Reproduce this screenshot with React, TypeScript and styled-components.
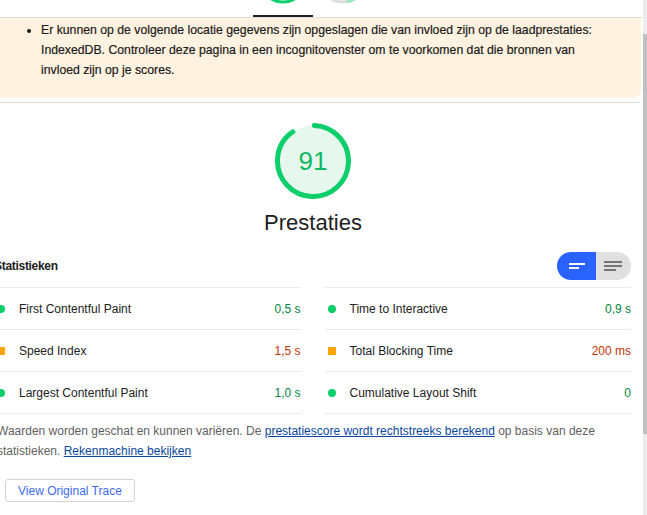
import React from "react";
import styled, { createGlobalStyle } from "styled-components";

const GlobalStyle = createGlobalStyle`
  html, body { margin: 0; padding: 0; background: #fff; }
  body {
    font-family: "Liberation Sans", Arial, sans-serif;
    color: #212121;
    overflow: hidden;
  }
  * { box-sizing: border-box; }
`;

const Page = styled.div`
  display: flex;
  width: 647px;
  height: 515px;
  overflow: hidden;
`;

const Main = styled.div`
  flex: 1;
  min-width: 0;
  overflow: hidden;
`;

const Scrollbar = styled.div`
  width: 4px;
  flex: none;
  background: #ececec;
  display: flex;
  flex-direction: column;
`;

const Thumb = styled.div`
  margin-top: 34px;
  height: 400px;
  background: #c1c1c1;
`;

const TabBar = styled.div`
  display: flex;
  margin-top: -36px;
  padding-left: 253px;
  border-bottom: 1px solid #e0e0e0;
`;

const Tab = styled.div<{ $active?: boolean }>`
  width: 60px;
  height: 53px;
  display: flex;
  align-items: flex-end;
  justify-content: center;
  padding-bottom: 11px;
  border-bottom: 2px solid ${(p) => (p.$active ? "#202124" : "transparent")};
`;

const Warning = styled.div`
  margin-right: 2px;
  background: #fff2e0;
  border-bottom-right-radius: 8px;
  padding: 2px 0 18px;
`;

const WarnList = styled.ul`
  margin: 0;
  padding: 0 0 0 41px;
  list-style: disc;
  font-size: 12.25px;
  line-height: 20px;
  color: #1b1b1b;
  -webkit-text-stroke: 0.2px #1b1b1b;
  li { padding-right: 14px; }
`;

const Divider = styled.div`
  margin: 4px 4px 0 0;
  height: 1px;
  background: #dcdcdc;
`;

const Category = styled.section`
  display: flex;
  flex-direction: column;
  align-items: center;
  padding-top: 20px;
`;

const GaugeWrap = styled.div`
  position: relative;
  width: 76px;
  height: 76px;
  margin-right: 17px;
`;

const Score = styled.div`
  position: absolute;
  inset: 0;
  display: flex;
  align-items: center;
  justify-content: center;
  font-size: 26px;
  color: #0fb862;
`;

const GaugeLabel = styled.div`
  margin-top: 12px;
  margin-right: 17px;
  font-size: 22px;
  line-height: 24px;
  color: #212121;
`;

const Metrics = styled.div`
  align-self: stretch;
  margin: 17px 12px 0 -6px;
`;

const MetricsHeader = styled.div`
  display: flex;
  align-items: center;
  justify-content: space-between;
  height: 28px;
`;

const Title = styled.div`
  font-size: 12px;
  font-weight: bold;
  letter-spacing: -0.3px;
  color: #202020;
`;

const Toggle = styled.div`
  display: flex;
  width: 74px;
  height: 28px;
  border-radius: 14px;
  overflow: hidden;
`;

const ToggleHalf = styled.div<{ $on?: boolean }>`
  flex: 1;
  display: flex;
  flex-direction: column;
  justify-content: center;
  align-items: flex-start;
  gap: 2px;
  padding-left: ${(p) => (p.$on ? "12px" : "8px")};
  background: ${(p) => (p.$on ? "#2962ff" : "#e0e0e0")};
`;

const Bar = styled.div<{ $w: number; $c: string }>`
  width: ${(p) => p.$w}px;
  height: 2px;
  background: ${(p) => p.$c};
`;

const MetricGrid = styled.div`
  display: grid;
  grid-template-columns: 1fr 1fr;
  column-gap: 24px;
  margin-top: 7px;
`;

const Metric = styled.div`
  display: flex;
  align-items: center;
  height: 42px;
  border-top: 1px solid #ebebeb;
  font-size: 12px;
  &:nth-last-child(-n + 2) {
    height: 43px;
    border-bottom: 1px solid #ebebeb;
  }
`;

const Icon = styled.span<{ $kind: "pass" | "average" }>`
  flex: none;
  width: 8px;
  height: 8px;
  margin: 0 14px 0 3px;
  border-radius: ${(p) => (p.$kind === "pass" ? "50%" : "0")};
  background: ${(p) => (p.$kind === "pass" ? "#0cce6b" : "#ffa400")};
`;

const Label = styled.span`
  flex: 1;
  color: #212121;
`;

const Value = styled.span<{ $kind: "pass" | "average" }>`
  color: ${(p) => (p.$kind === "pass" ? "#018642" : "#c33300")};
`;

const Footnote = styled.p`
  margin: 7px 0 0 3px;
  font-size: 12px;
  line-height: 20px;
  color: #616161;
  a {
    color: #0b47a1;
    text-decoration: underline;
  }
`;

const TraceButton = styled.button`
  display: block;
  margin: 18px 0 0 11px;
  height: 23px;
  padding: 0 12px;
  border: 1px solid #d3d3d3;
  border-radius: 3px;
  background: #fff;
  color: #3d6cf4;
  font-family: "Liberation Sans", Arial, sans-serif;
  font-size: 12px;
`;

const TabGauge: React.FC<{ variant: "pass" | "pwa" }> = ({ variant }) => {
  const r = 23;
  const c = 2 * Math.PI * r;
  return (
    <svg width="50" height="50" viewBox="0 0 50 50">
      {variant === "pass" ? (
        <>
          <circle cx="25" cy="25" r={r} fill="#e6f8ee" />
          <circle
            cx="25"
            cy="25"
            r={r}
            fill="none"
            stroke="#0cce6b"
            strokeWidth="3"
          />
        </>
      ) : (
        <>
          <circle cx="25" cy="25" r={r} fill="#f5f5f5" stroke="#dcdcdc" strokeWidth="3" />
          <circle
            cx="25"
            cy="25"
            r={r}
            fill="none"
            stroke="#9fe3bf"
            strokeWidth="3"
            strokeDasharray={`${c * 0.25} ${c}`}
            transform="rotate(-10 25 25)"
          />
        </>
      )}
    </svg>
  );
};

const BigGauge: React.FC<{ score: number }> = ({ score }) => {
  const r = 35.5;
  const c = 2 * Math.PI * r;
  return (
    <svg width="76" height="76" viewBox="0 0 76 76">
      <circle cx="38" cy="38" r={r} fill="#e6f8ee" />
      <circle
        cx="38"
        cy="38"
        r={r}
        fill="none"
        stroke="#0cce6b"
        strokeWidth="5"
        strokeLinecap="round"
        strokeDasharray={`${c * (score / 100) - 3} ${c}`}
        transform="rotate(-88 38 38)"
      />
    </svg>
  );
};

type Kind = "pass" | "average";
const metrics: { label: string; value: string; kind: Kind }[] = [
  { label: "First Contentful Paint", value: "0,5 s", kind: "pass" },
  { label: "Time to Interactive", value: "0,9 s", kind: "pass" },
  { label: "Speed Index", value: "1,5 s", kind: "average" },
  { label: "Total Blocking Time", value: "200 ms", kind: "average" },
  { label: "Largest Contentful Paint", value: "1,0 s", kind: "pass" },
  { label: "Cumulative Layout Shift", value: "0", kind: "pass" },
];

export default function App() {
  return (
    <>
      <GlobalStyle />
      <Page>
        <Main>
          <TabBar>
            <Tab $active>
              <TabGauge variant="pass" />
            </Tab>
            <Tab>
              <TabGauge variant="pwa" />
            </Tab>
          </TabBar>
          <Warning>
            <WarnList>
              <li>
                Er kunnen op de volgende locatie gegevens zijn opgeslagen die van
                invloed zijn op de laadprestaties: IndexedDB. Controleer deze
                pagina in een incognitovenster om te voorkomen dat die bronnen van
                invloed{"\u00a0"}zijn op je scores.
              </li>
            </WarnList>
          </Warning>
          <Divider />
          <Category>
            <GaugeWrap>
              <BigGauge score={91} />
              <Score>91</Score>
            </GaugeWrap>
            <GaugeLabel>Prestaties</GaugeLabel>
            <Metrics>
              <MetricsHeader>
                <Title>Statistieken</Title>
                <Toggle>
                  <ToggleHalf $on>
                    <Bar $w={16} $c="#ffffff" />
                    <Bar $w={10} $c="#ffffff" />
                  </ToggleHalf>
                  <ToggleHalf>
                    <Bar $w={18} $c="#757575" />
                    <Bar $w={18} $c="#757575" />
                    <Bar $w={12} $c="#757575" />
                  </ToggleHalf>
                </Toggle>
              </MetricsHeader>
              <MetricGrid>
                {metrics.map((m) => (
                  <Metric key={m.label}>
                    <Icon $kind={m.kind} />
                    <Label>{m.label}</Label>
                    <Value $kind={m.kind}>{m.value}</Value>
                  </Metric>
                ))}
              </MetricGrid>
              <Footnote>
                Waarden worden geschat en kunnen variëren. De{" "}
                <a href="#">prestatiescore wordt rechtstreeks berekend</a> op basis
                van deze statistieken. <a href="#">Rekenmachine bekijken</a>
              </Footnote>
              <TraceButton>View Original Trace</TraceButton>
            </Metrics>
          </Category>
        </Main>
        <Scrollbar>
          <Thumb />
        </Scrollbar>
      </Page>
    </>
  );
}
